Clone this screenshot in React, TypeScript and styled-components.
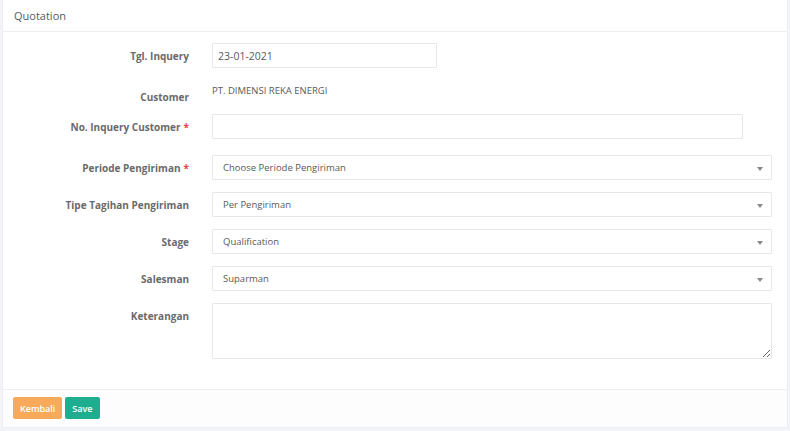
import React from "react";
import styled, { createGlobalStyle } from "styled-components";

const Global = createGlobalStyle`
  html, body { margin: 0; padding: 0; background: #f3f4f9; }
  body { font-family: "Open Sans", "Liberation Sans", sans-serif; }
  * { box-sizing: border-box; }
`;

const Page = styled.div`
  width: 790px;
  height: 431px;
  padding: 0 2px 4px 2px;
  background: #f3f4f9;
`;

const Card = styled.div`
  background: #fff;
  border: 1px solid #eceef4;
  border-top: none;
`;

const Header = styled.div`
  height: 32px;
  display: flex;
  align-items: center;
  padding-left: 11px;
  border-bottom: 1px solid #eceef2;
  font-size: 11px;
  color: #5a5a5a;
`;

const Body = styled.div`
  padding: 11px 15px 30px 0;
  display: flex;
  flex-direction: column;
`;

const Row = styled.div<{ $gap?: number }>`
  display: grid;
  grid-template-columns: 186px 1fr;
  column-gap: 23px;
  align-items: start;
  margin-bottom: ${(p) => (p.$gap ?? 12)}px;
  &:last-child { margin-bottom: 0; }
`;

const Label = styled.div<{ $top?: number }>`
  text-align: right;
  font-size: 10px;
  font-weight: 700;
  color: #6a6a6a;
  line-height: 14px;
  padding-top: ${(p) => (p.$top ?? 6)}px;
  white-space: nowrap;
`;

const Req = styled.span`
  color: #e5454c;
  margin-left: 3px;
`;

const TextInput = styled.input<{ $width?: number }>`
  display: block;
  width: ${(p) => (p.$width ? `${p.$width}px` : "100%")};
  height: 25px;
  border: 1px solid #e6e7ea;
  border-radius: 1px;
  padding: 0 5px;
  font-family: "Open Sans", "Liberation Sans", sans-serif;
  font-size: 10.5px;
  color: #5a5a5a;
  background: #fff;
  outline: none;
`;

const StaticText = styled.div`
  font-size: 9.5px;
  color: #5a5a5a;
  line-height: 14px;
  padding-top: 4px;
`;

const Select = styled.div`
  position: relative;
  height: 25px;
  border: 1px solid #e6e7ea;
  border-radius: 1px;
  display: flex;
  align-items: center;
  padding: 0 10px;
  font-size: 9.5px;
  color: #5a5a5a;
  background: #fff;
`;

const Caret = styled.span`
  position: absolute;
  right: 8px;
  top: 50%;
  margin-top: -1px;
  width: 0;
  height: 0;
  border-left: 3px solid transparent;
  border-right: 3px solid transparent;
  border-top: 4px solid #888;
`;

const TextArea = styled.textarea`
  display: block;
  width: 100%;
  height: 56px;
  border: 1px solid #e6e7ea;
  border-radius: 1px;
  outline: none;
  resize: vertical;
  font-family: "Open Sans", "Liberation Sans", sans-serif;
  font-size: 10.5px;
`;

const Footer = styled.div`
  border-top: 1px solid #eceef2;
  background: #fdfdfd;
  height: 38px;
  padding: 7px 10px;
  display: flex;
  gap: 3px;
  align-items: flex-start;
`;

const Button = styled.button<{ $variant: "warn" | "ok" }>`
  height: 22px;
  border: none;
  border-radius: 2px;
  padding: 0 7px;
  font-family: "Open Sans", "Liberation Sans", sans-serif;
  font-size: 9px;
  font-weight: 600;
  color: #fff;
  background: ${(p) => (p.$variant === "warn" ? "#f8a95a" : "#1cae8e")};
  cursor: pointer;
`;

const selects = [
  { label: "Periode Pengiriman", req: true, value: "Choose Periode Pengiriman" },
  { label: "Tipe Tagihan Pengiriman", value: "Per Pengiriman" },
  { label: "Stage", value: "Qualification" },
  { label: "Salesman", value: "Suparman" },
];

export default function App() {
  return (
    <>
      <Global />
      <Page>
        <Card>
          <Header>Quotation</Header>
          <Body>
            <Row>
              <Label>Tgl. Inquery</Label>
              <TextInput $width={225} readOnly defaultValue="23-01-2021" />
            </Row>
            <Row $gap={10}>
              <Label $top={10}>Customer</Label>
              <StaticText>PT. DIMENSI REKA ENERGI</StaticText>
            </Row>
            <Row $gap={16}>
              <Label>
                No. Inquery Customer<Req>*</Req>
              </Label>
              <TextInput $width={531} readOnly defaultValue="" />
            </Row>
            {selects.map((s) => (
              <Row key={s.label}>
                <Label>
                  {s.label}
                  {s.req && <Req>*</Req>}
                </Label>
                <Select>
                  {s.value}
                  <Caret />
                </Select>
              </Row>
            ))}
            <Row>
              <Label>Keterangan</Label>
              <TextArea />
            </Row>
          </Body>
          <Footer>
            <Button $variant="warn">Kembali</Button>
            <Button $variant="ok">Save</Button>
          </Footer>
        </Card>
      </Page>
    </>
  );
}
